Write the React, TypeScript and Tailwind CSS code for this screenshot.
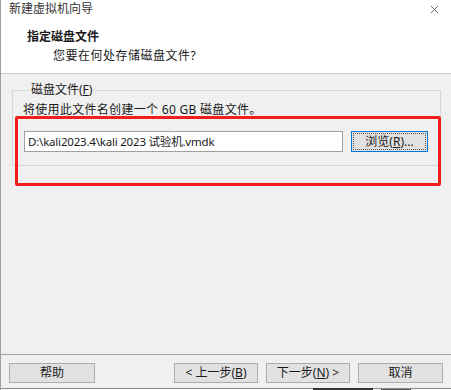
import { X } from "lucide-react";

const font = {
  fontFamily: '"Noto Sans", "Noto Sans CJK SC", sans-serif',
};

const WinButton = ({
  children,
  className = "",
}: {
  children: React.ReactNode;
  className?: string;
}) => (
  <button
    className={
      "h-[20px] border border-[#adadad] bg-[#e1e1e1] text-[12px] leading-[16px] text-[#1a1a1a] " +
      className
    }
  >
    {children}
  </button>
);

export default function App() {
  return (
    <div
      className="relative flex h-[390px] w-[451px] flex-col overflow-hidden border-l border-[#a0a0a0] bg-[#f0f0f0] text-[12px] text-[#1a1a1a]"
      style={font}
    >
      {/* header */}
      <div className="h-[74px] shrink-0 border-b border-[#c8c8c8] bg-white">
        <div className="flex items-center justify-between pl-[8px] pr-[10px] pt-[1px]">
          <span className="text-[12px] leading-[16px] text-[#333]">新建虚拟机向导</span>
          <X className="h-[13px] w-[13px] text-[#333]" strokeWidth={1.3} />
        </div>
        <div className="mt-[12px] pl-[26px] text-[12px] font-bold leading-[16px]">
          指定磁盘文件
        </div>
        <div className="mt-[3px] pl-[52px] text-[12px] leading-[16px] tracking-[0.5px]">
          您要在何处存储磁盘文件?
        </div>
      </div>

      {/* group box */}
      <fieldset className="ml-[11px] mr-[10px] mt-[8px] h-[84px] border border-[#d6d6d6] pl-[10px] pr-[12px]">
        <legend className="ml-[6px] px-[2px] text-[12px] leading-[16px]">
          磁盘文件(<span className="underline">F</span>)
        </legend>
        <div className="mt-[4px] text-[12px] leading-[16px] tracking-[0.3px]">
          将使用此文件名创建一个 60 GB 磁盘文件。
        </div>
        <div className="mt-[13px] flex items-center">
          <div className="ml-[1px] flex h-[21px] w-[319px] items-center border border-[#a0a0a0] bg-white pl-[3px] text-[11.5px] leading-[16px] tracking-[-0.2px]">
            D:\kali2023.4\kali 2023 试验机.vmdk
          </div>
          <button className="ml-[8px] h-[21px] w-[77px] border border-[#0078d7] bg-[#e1e1e1] p-[1px] text-[12px] leading-[16px]">
            <span className="flex h-full w-full items-center justify-center border border-dotted border-[#555]">
              浏览(<span className="underline">R</span>)...
            </span>
          </button>
        </div>
      </fieldset>

      {/* footer */}
      <div className="mt-auto h-[36px] border-t border-[#a0a0a0] pt-[8px]">
        <div className="flex pl-[8px] pr-[8px]">
          <WinButton className="w-[86px]">帮助</WinButton>
          <div className="flex-1" />
          <div className="flex gap-[8px]">
            <WinButton className="w-[84px]">
              &lt; 上一步(<span className="underline">B</span>)
            </WinButton>
            <WinButton className="w-[84px]">
              下一步(<span className="underline">N</span>) &gt;
            </WinButton>
            <WinButton className="w-[85px]">取消</WinButton>
          </div>
        </div>
      </div>
      <div className="absolute bottom-0 left-0 h-[2px] w-full border-t border-[#8a8a8a] bg-white" />
      <div className="absolute bottom-0 left-[312px] h-[2px] w-[60px] bg-[#333]" />
      <div className="absolute bottom-0 left-[380px] h-[1px] w-[30px] bg-[#555]" />

      {/* red annotation */}
      <div className="absolute left-[14px] top-[116px] h-[70px] w-[426px] rounded-[2px] border-[3px] border-[#f21d1d]" />
    </div>
  );
}
